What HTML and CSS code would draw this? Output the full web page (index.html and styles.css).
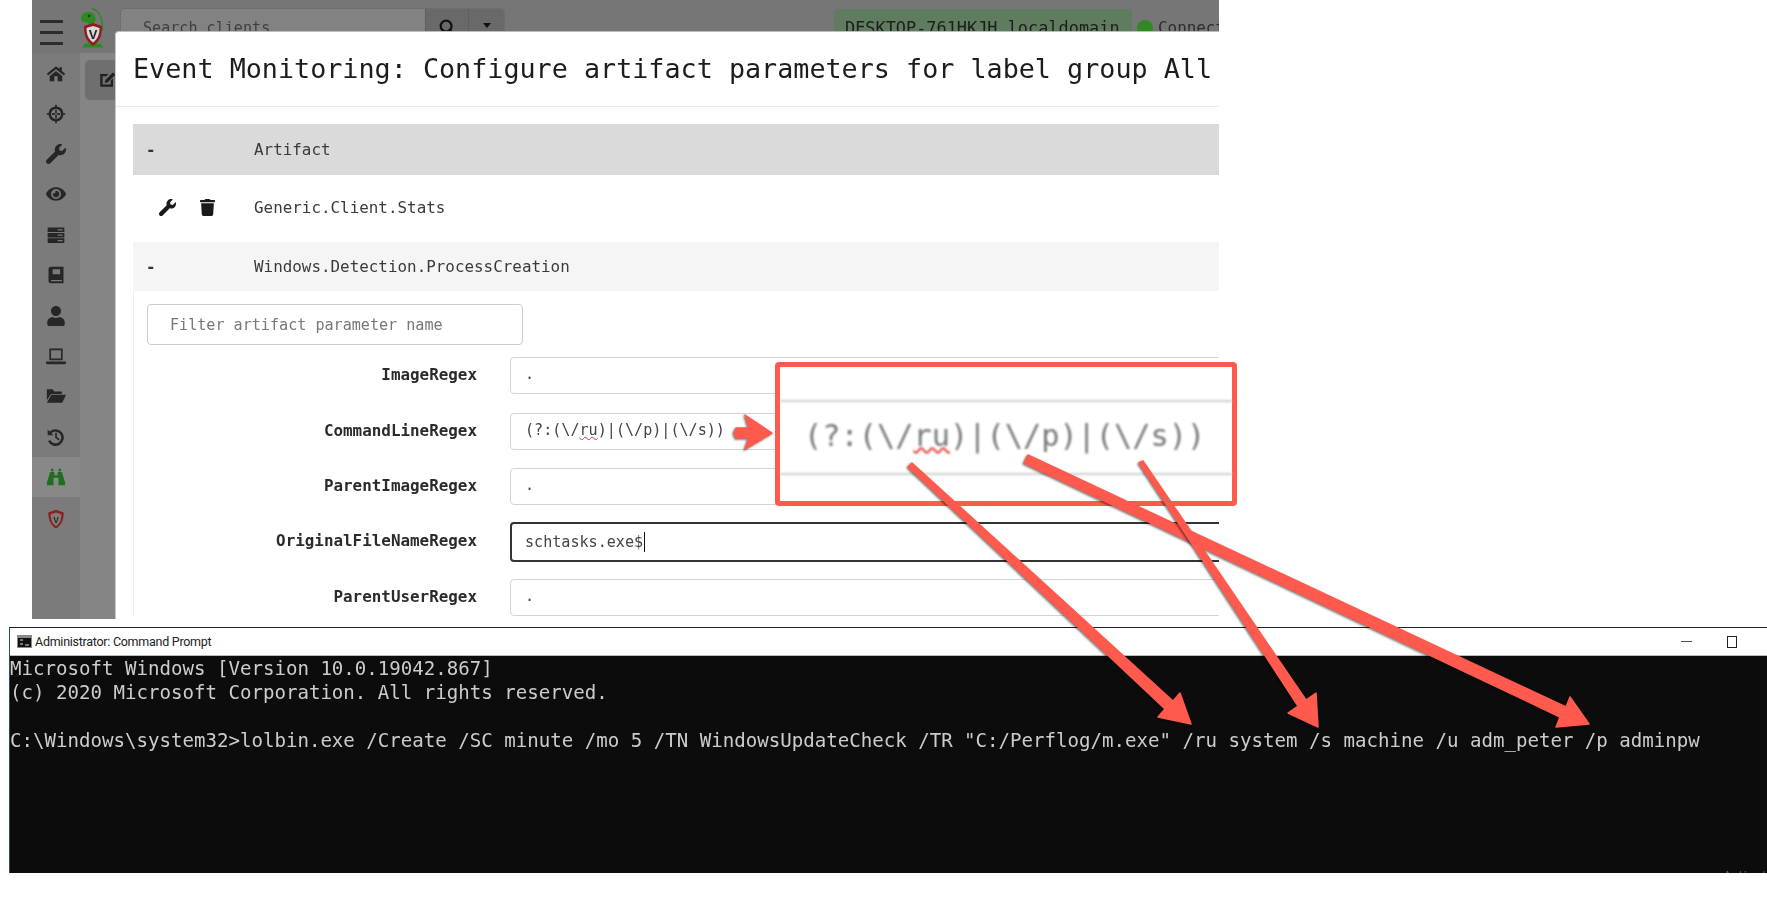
FILE: index.html
```html
<!DOCTYPE html>
<html lang="en">
<head>
<meta charset="utf-8">
<title>Event Monitoring</title>
<link rel="stylesheet" href="styles.css">
</head>
<body>
<div class="page">
  <section class="shot">
    <header class="topbar">
      <svg class="burger" viewBox="0 0 23 26"><rect y="0" width="23" height="3"/><rect y="11" width="23" height="3"/><rect y="22" width="23" height="3"/></svg>
      <svg class="logo" viewBox="0 0 25 40">
        <path class="logo-tail" d="M12 0.500c7 2 11 10 10.500 22"/>
        <path class="logo-green" d="M1 11c0-5 4-7.500 8-7 5 .5 7 4.500 6.500 9l-3 5c-3 0-4-2-5-3.500-3 0-6.500-1-6.500-3.500z"/>
        <circle class="logo-eye" cx="9" cy="8" r="1.300"/>
        <path class="logo-green" d="M2 39.500l3-4h15l3.500 4z"/>
        <path class="logo-red" d="M13 15l9 3c0 10-2 15-9 20-7-5-9-10-9-20z"/>
        <path class="logo-white" d="M13 18l6.500 2c0 7-2 11-6.500 14.500C8.500 31 6.500 27 6.500 20z"/>
        <text class="logo-v" x="13" y="30.500" text-anchor="middle">V</text>
      </svg>
      <div class="search">
        <span class="search-text">Search clients</span>
        <span class="search-btn"><svg class="search-glass" viewBox="0 0 20 20"><circle cx="9" cy="9" r="6"/><path d="M13 13l5 5"/></svg></span>
        <span class="search-drop"><i class="caret-down"></i></span>
      </div>
      <span class="badge">DESKTOP-761HKJH.localdomain</span>
      <i class="dot"></i>
      <span class="conn">Connected</span>
    </header>
    <div class="workspace">
      <nav class="sidebar">
        <a class="nav"><svg viewBox="0 0 24 24"><path d="M12 4L1 13l1.500 2L12 7.500 21.500 15l1.500-2-4-3.300V5h-3v2.200zM4.500 15.500V22H10v-6h4v6h5.500v-6.500L12 9.500z"/></svg></a>
        <a class="nav"><svg viewBox="0 0 24 24"><path fill-rule="evenodd" d="M11 1h2v2.100A9 9 0 0 1 20.900 11H23v2h-2.100A9 9 0 0 1 13 20.900V23h-2v-2.100A9 9 0 0 1 3.100 13H1v-2h2.100A9 9 0 0 1 11 3.100zM12 6a6 6 0 1 0 0 12 6 6 0 0 0 0-12z"/><rect x="11" y="7" width="2" height="4"/><rect x="11" y="13" width="2" height="4"/><rect x="7" y="11" width="4" height="2"/><rect x="13" y="11" width="4" height="2"/></svg></a>
        <a class="nav"><svg viewBox="0 0 512 512"><path d="M507.730 109.100c-2.240-9.030-13.540-12.090-20.120-5.510l-74.360 74.360-67.880-11.310-11.310-67.880 74.360-74.360c6.620-6.620 3.430-17.900-5.660-20.160-47.380-11.740-99.550.91-136.580 37.930-39.640 39.640-50.550 97.100-34.050 147.200L18.740 402.760c-24.990 24.990-24.990 65.510 0 90.500 24.990 24.990 65.510 24.990 90.500 0l213.210-213.210c50.120 16.710 107.470 5.680 147.370-34.220 37.070-37.070 49.700-89.320 37.910-136.730z"/></svg></a>
        <a class="nav"><svg viewBox="0 0 576 512"><path d="M572.520 241.400C518.290 135.590 410.930 64 288 64S57.680 135.640 3.480 241.410a32.350 32.350 0 0 0 0 29.190C57.710 376.410 165.070 448 288 448s230.320-71.640 284.520-177.41a32.350 32.350 0 0 0 0-29.190zM288 400a144 144 0 1 1 144-144 143.930 143.930 0 0 1-144 144zm0-240a95.310 95.310 0 0 0-25.310 3.790 47.850 47.850 0 0 1-66.900 66.900A95.780 95.780 0 1 0 288 160z"/></svg></a>
        <a class="nav"><svg viewBox="0 0 24 24"><path fill-rule="evenodd" d="M2 3h20v5.500H2zM14 5v1.500h6V5zM2 9.500h20V15H2zM14 11.500V13h6v-1.500zM2 16h20v5.500H2zM14 18v1.500h6V18z"/></svg></a>
        <a class="nav"><svg viewBox="0 0 24 24"><path fill-rule="evenodd" d="M6 2h15v20H6a3 3 0 0 1-3-3V5a3 3 0 0 1 3-3zm2 3v6h9V5zM6 18v1.500h13V18z"/></svg></a>
        <a class="nav"><svg viewBox="0 0 448 512"><path d="M224 256c70.700 0 128-57.300 128-128S294.700 0 224 0 96 57.300 96 128s57.300 128 128 128zm89.600 32h-16.700c-22.200 10.200-46.900 16-72.900 16s-50.600-5.800-72.900-16h-16.700C60.200 288 0 348.200 0 422.400V464c0 26.500 21.500 48 48 48h352c26.500 0 48-21.500 48-48v-41.600c0-74.200-60.200-134.400-134.400-134.400z"/></svg></a>
        <a class="nav"><svg viewBox="0 0 24 24"><path fill-rule="evenodd" d="M4 3h16v14H4zm2 2v10h12V5zM0 18.500h24V20a2 2 0 0 1-2 2H2a2 2 0 0 1-2-2z"/></svg></a>
        <a class="nav"><svg viewBox="0 0 24 24"><path d="M1 4h7l2 2.500h9v3H6L1 17zM6.500 10.500H24L19.500 20H1z"/></svg></a>
        <a class="nav"><svg viewBox="0 0 24 24"><path d="M2 3v7h7L6.500 7.500A7 7 0 1 1 5 15.500l-2.600 1.700A10 10 0 1 0 4.500 5.500z"/><path d="M11 7h2v5l3.500 2.500-1.200 1.600L11 13z"/></svg></a>
        <a class="nav nav-active"><svg viewBox="0 0 24 24"><path d="M6 2h3v3H6zM15 2h3v3h-3zM5 6h5v4h4V6h5l4 13v3h-8v-9h-6v9H1v-3z"/></svg></a>
        <a class="nav nav-shield"><svg viewBox="0 0 24 26"><path class="logo-red" d="M12 1l10 3.500c0 10-3 16-10 21-7-5-10-11-10-21z"/><path class="shield-in" d="M12 4.500l7 2.400c0 7-2 12-7 15.500-5-3.500-7-8.500-7-15.500z"/><text class="shield-v" x="12" y="18" text-anchor="middle">V</text></svg></a>
      </nav>
      <main class="content">
        <div class="tab"><svg viewBox="0 0 24 24"><path fill-rule="evenodd" d="M3 4h11l-3 3H6v11h11v-5l3-3v11H3z"/><path d="M10 12L20 2l3 3-10 10-4 1z"/></svg></div>
      </main>
    </div>
    <div class="modal">
      <h1 class="modal-title">Event Monitoring: Configure artifact parameters for label group All</h1>
      <div class="modal-body">
        <div class="row row-head">
          <span class="cell-tools"><span class="minus">-</span></span>
          <span>Artifact</span>
        </div>
        <div class="row row-item">
          <span class="cell-tools cell-icons">
            <svg class="tool" viewBox="0 0 512 512"><path d="M507.730 109.100c-2.240-9.030-13.540-12.090-20.120-5.510l-74.360 74.360-67.880-11.310-11.310-67.880 74.360-74.360c6.620-6.620 3.430-17.900-5.660-20.160-47.380-11.740-99.550.91-136.580 37.930-39.640 39.640-50.550 97.100-34.050 147.200L18.740 402.760c-24.990 24.990-24.990 65.510 0 90.500 24.990 24.990 65.510 24.990 90.500 0l213.210-213.210c50.120 16.710 107.470 5.680 147.370-34.220 37.070-37.070 49.700-89.320 37.910-136.730z"/></svg>
            <svg class="tool" viewBox="0 0 448 512"><path d="M432 32H312l-9.400-18.700A24 24 0 0 0 281.100 0H166.800a23.720 23.720 0 0 0-21.400 13.300L136 32H16A16 16 0 0 0 0 48v32a16 16 0 0 0 16 16h416a16 16 0 0 0 16-16V48a16 16 0 0 0-16-16zM53.200 467a48 48 0 0 0 47.900 45h245.800a48 48 0 0 0 47.900-45L416 128H32z"/></svg>
          </span>
          <span>Generic.Client.Stats</span>
        </div>
        <div class="row row-sub">
          <span class="cell-tools"><span class="minus">-</span></span>
          <span>Windows.Detection.ProcessCreation</span>
        </div>
        <div class="params">
          <div class="filter">Filter artifact parameter name</div>
          <div class="field"><label>ImageRegex</label><div class="input">.</div></div>
          <div class="field"><label>CommandLineRegex</label><div class="input">(?:(\/<span class="spell">ru</span>)|(\/p)|(\/s))</div></div>
          <div class="field"><label>ParentImageRegex</label><div class="input">.</div></div>
          <div class="field field-focus"><label>OriginalFileNameRegex</label><div class="input input-focus">schtasks.exe$<i class="text-caret"></i></div></div>
          <div class="field"><label>ParentUserRegex</label><div class="input">.</div></div>
        </div>
      </div>
    </div>
  </section>

  <section class="console">
    <div class="console-title">
      <svg class="console-icon" viewBox="0 0 15 13"><rect width="15" height="13" fill="#8a8a8a"/><rect x="1" y="3" width="13" height="9" fill="#111"/><path d="M3 5h3M3 9h3M8 10h4" stroke="#ddd" stroke-width="1.200"/></svg>
      <span class="console-name">Administrator: Command Prompt</span>
      <span class="win-min"></span>
      <span class="win-max"></span>
    </div>
    <div class="console-body">
      <div class="line">Microsoft Windows [Version 10.0.19042.867]</div>
      <div class="line">(c) 2020 Microsoft Corporation. All rights reserved.</div>
      <div class="line"> </div>
      <div class="line">C:\Windows\system32&gt;lolbin.exe /Create /SC minute /mo 5 /TN WindowsUpdateCheck /TR "C:/Perflog/m.exe" /ru system /s machine /u adm_peter /p adminpw</div>
      <span class="watermark">Activate Windows</span>
    </div>
  </section>

  <div class="callout">
    <div class="callout-input">(?:(\/<span class="spell">ru</span>)|(\/p)|(\/s))</div>
  </div>

  <svg class="annot" viewBox="0 0 1767 903">
    <polygon points="736,428 749,428 745,415 772,433 745,449 749,438 736,438 734,433"/>
    <polygon points="912,463 1173,701 1180,693 1191,724 1158,717 1165,709 908,467"/>
    <polygon points="1028,455 1566,707 1570,697 1589,724 1556,727 1560,717 1024,463"/>
    <polygon points="1143,461 1306,700 1316,693 1318,727 1288,713 1298,706 1139,463"/>
  </svg>
</div>
</body>
</html>
```
FILE: styles.css
```css
* { box-sizing: border-box; }
html, body { margin: 0; padding: 0; background: #fff; }
body { width: 1767px; height: 903px; overflow: hidden; font-family: "DejaVu Sans Mono", "Liberation Mono", monospace; }
.page { position: relative; width: 1767px; height: 903px; overflow: hidden; }

/* Browser screenshot */
.shot { position: relative; margin-left: 32px; width: 1187px; height: 619px; overflow: hidden; background: #858585; filter: blur(.45px); }
.topbar { display: flex; align-items: flex-start; height: 53px; padding: 8px 0 0 8px; background: #767676; }
.burger { width: 23px; height: 26px; margin-top: 12px; fill: #2c2c2c; flex: none; }
.logo { width: 25px; height: 40px; margin-left: 17px; flex: none; }
.logo-green { fill: #2c8a1e; }
.logo-tail { fill: none; stroke: #2c8a1e; stroke-width: 1.400; }
.logo-red { fill: #8f1d20; }
.logo-white { fill: #d8d8d8; }
.logo-eye { fill: #0c4a08; }
.logo-v { font: bold 13px "Liberation Sans", sans-serif; fill: #222; }
.search { display: flex; width: 385px; height: 40px; margin-left: 15px; flex: none; background: #828282; border: 1px solid #6e6e6e; border-radius: 4px; overflow: hidden; }
.search-text { flex: 1; padding: 10px 0 0 22px; font-size: 15.1px; color: #3f3f3f; }
.search-btn { width: 43px; background: #696969; border-left: 1px solid #5e5e5e; display: flex; justify-content: center; padding-top: 9px; }
.search-glass { width: 18px; height: 18px; fill: none; stroke: #111; stroke-width: 2.500; }
.search-drop { width: 36px; background: #696969; border-left: 1px solid #5e5e5e; display: flex; justify-content: center; padding-top: 14px; }
.caret-down { width: 0; height: 0; border: 4px solid transparent; border-top: 5px solid #111; }
.badge { margin: 1px 0 0 329px; padding: 9px 11px; width: 298px; height: 40px; flex: none; background: #5f7c5f; border-radius: 4px; font-size: 16.9px; line-height: 20px; white-space: nowrap; color: #1d1d1d; }
.dot { width: 16px; height: 16px; margin: 12px 0 0 5px; flex: none; border-radius: 50%; background: #2f8a1f; }
.conn { margin: 10px 0 0 5px; font-size: 15.9px; color: #2c2c2c; white-space: nowrap; }
.workspace { display: flex; height: 566px; }
.sidebar { width: 48px; flex: none; background: #7b7b7b; display: flex; flex-direction: column; }
.nav { height: 40.4px; flex: none; display: flex; align-items: center; justify-content: center; color: #232323; }
.nav svg { width: 20px; height: 20px; fill: #262626; }
.nav-active { background: #888; }
.nav-active svg { fill: #1f6e1f; }
.nav-shield { padding-top: 3px; }
.shield-in { fill: #7c7c7c; }
.shield-v { font: bold 11px "Liberation Sans", sans-serif; fill: #2a2a2a; }
.content { flex: 1; background: #858585; padding: 7px 0 0 5px; }
.tab { width: 60px; height: 40px; background: #6f6f6f; border-radius: 5px; padding: 11px 0 0 13px; }
.tab svg { width: 18px; height: 18px; fill: #1f1f1f; }

/* Modal */
.modal { position: absolute; left: 83px; top: 31px; width: 1400px; height: 700px; background: #fff; border-top: 1px solid #bdbdbd; border-left: 1px solid #c8c8c8; border-radius: 4px 0 0 0; color: #212529; }
.modal-title { margin: 0; height: 75px; padding: 20px 0 0 17px; font-size: 26.75px; line-height: 34px; font-weight: 400; color: #1c1c1c; white-space: nowrap; border-bottom: 1px solid #e9e9e9; }
.modal-body { padding: 17px 0 0 17px; font-size: 15.9px; color: #3a3a3a; }
.row { display: flex; align-items: center; }
.cell-tools { width: 121px; flex: none; padding-left: 13px; }
.minus { font-weight: 700; color: #333; }
.row-head { height: 51px; background: #dadada; }
.row-item { height: 67px; padding-bottom: 2px; }
.row-sub { height: 49px; background: #f5f5f5; padding-bottom: 1px; }
.cell-icons { display: flex; align-items: center; gap: 23px; padding-left: 26px; }
.tool { width: 17px; height: 17px; fill: #1a1a1a; }
.params { border-left: 1px solid #eee; padding: 13px 0 0 13px; }
.filter { width: 376px; height: 41px; padding: 11px 0 0 22px; border: 1px solid #ccc; border-radius: 4px; font-size: 15.1px; color: #777; }
.field { display: flex; align-items: center; height: 37px; margin-top: 18.500px; }
.filter + .field { margin-top: 12px; }
.field-focus { margin-top: 16.500px; height: 40px; }
.field-focus + .field { margin-top: 17px; }
.field label { width: 330px; flex: none; padding-bottom: 2px; text-align: right; font-weight: 700; color: #2b2b2b; }
.input { margin-left: 33px; width: 1000px; height: 100%; padding: 7px 0 0 14px; border: 1px solid #d4d4d4; border-radius: 4px; font-size: 15.1px; color: #444; white-space: nowrap; }
.input-focus { border: 2px solid #333; padding-top: 8px; padding-left: 13px; }
.text-caret { display: inline-block; width: 1px; height: 20px; margin-left: 1px; background: #111; vertical-align: -5px; }
.spell { text-decoration: underline wavy #e0342c; text-decoration-thickness: 1px; }

/* Console window */
.console { margin: 8px 0 0 9px; height: 246px; border-top: 1px solid #222; border-left: 1px solid #26506e; display: flex; flex-direction: column; }
.console-title { height: 28px; flex: none; display: flex; align-items: center; background: #fff; border-bottom: 1px solid #bbb; }
.console-icon { width: 15px; height: 13px; margin-left: 7px; }
.console-name { margin-left: 3px; font: 12.5px Roboto, sans-serif; letter-spacing: -.27px; color: #222; }
.win-min { width: 11px; height: 1.500px; margin-left: auto; background: #555; }
.win-max { width: 10px; height: 12px; margin: 0 30px 0 35px; border: 1px solid #222; }
.console-body { position: relative; flex: 1; overflow: hidden; background: #0c0c0c; padding-top: 1px; color: #ccc; font-size: 19.1px; line-height: 24.100px; filter: blur(.3px); }
.line { white-space: pre; height: 24.100px; }
.watermark { position: absolute; left: 1713px; top: 210px; font: 14px "Open Sans", sans-serif; color: #666; white-space: nowrap; }

/* Annotations */
.callout { position: absolute; left: 775px; top: 362px; width: 462px; height: 144px; border: 5px solid #ff5a4d; border-radius: 4px; background: #fff; padding-top: 33px; }
.callout-input { height: 75px; border-top: 2px solid #cfcfcf; border-bottom: 2px solid #cfcfcf; padding-left: 24px; font-size: 30.3px; line-height: 67px; color: #777; white-space: nowrap; filter: blur(.8px); }
.callout-input .spell { text-decoration-thickness: 2px; }
.annot { position: absolute; left: 0; top: 0; width: 1767px; height: 903px; }
.annot polygon { fill: #ff5a4d; stroke: #ff5a4d; stroke-width: 1.500; stroke-linejoin: round; filter: drop-shadow(-1px 1px 1px rgba(0,0,0,.55)); }
```
